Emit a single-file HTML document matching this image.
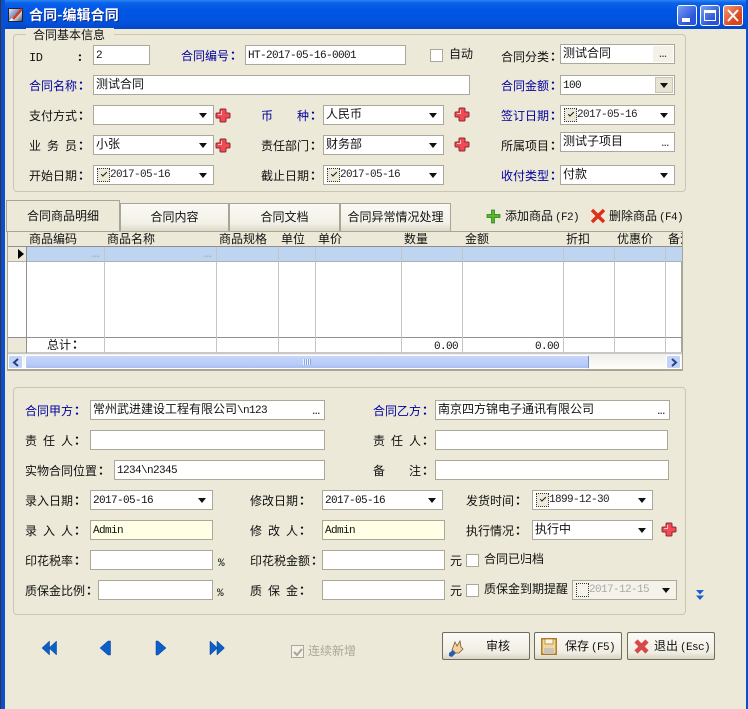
<!DOCTYPE html>
<html><head><meta charset="utf-8"><style>
html,body{margin:0;padding:0}
body{width:748px;height:709px;overflow:hidden;position:relative;background:#ECE9D8;font:12px/14px "WenQuanYi Zen Hei","Noto Sans CJK SC",sans-serif;color:#111}
div,span{position:absolute;box-sizing:border-box;white-space:nowrap}
i{font:bold 12px/14px "Noto Sans CJK JP",sans-serif;margin-left:-2px}
.m{position:static;font:11px/14px "Liberation Mono",monospace;letter-spacing:-.6px}
.b{color:#0000a0}
.i{border:1px solid #aca899;background:#fff;height:20px;padding:1px 0 0 2px;line-height:14px}
.i .m{line-height:15px}
.y{background:#ffffe6}
.a{width:0;height:0;border:4px solid transparent;border-top:5px solid #111;border-bottom:0;top:7px;right:6px}
.e{right:1px;top:1px;bottom:1px;width:20px;color:#444;font:bold 9px/17px "Liberation Sans",sans-serif;text-align:center;background:#f4f2e8}
.k{left:3px;top:2px;width:13px;height:14px;border:1px dotted #333;background:#ece9d8}
.k.x:after{content:"";position:absolute;left:3px;top:3px;width:5px;height:2px;border-left:1.5px solid #111;border-bottom:1.5px solid #111;transform:rotate(-45deg)}
.d{left:16px;top:2px;color:#222}
.c{width:13px;height:13px;border:1px solid #aca899;background:#fff}
.g{position:absolute;border:1px solid #c9c6b5;border-radius:4px}
.v{top:247px;width:1px;height:106px;background:#c4c4c4}
.h{top:232px;height:14px;background:#ece9d8;padding-left:2px;line-height:14px}
.t{background:linear-gradient(#faf9f4,#f3f1e7 70%,#dcd9c8);border:1px solid #a8a594;border-bottom:0;text-align:center;line-height:26px;top:203px;height:28px}
.s{top:632px;height:28px;width:88px;border:1px solid #6f6c5f;border-radius:2px;background:linear-gradient(#fbfaf5,#f0eee3 75%,#d8d4c3);line-height:24px}
svg{position:absolute;overflow:visible}
</style></head><body>
<svg width="0" height="0" style="left:0;top:0"><defs>
<g id="plus"><path d="M5 1h4a1 1 0 0 1 1 1v3h3a1 1 0 0 1 1 1v3a1 1 0 0 1-1 1h-3v3a1 1 0 0 1-1 1H5a1 1 0 0 1-1-1v-3H1a1 1 0 0 1-1-1V6a1 1 0 0 1 1-1h3V2a1 1 0 0 1 1-1z" fill="#ef4a55" stroke="#8c2a30" stroke-width="1"/><path d="M5.500 3v3.500H2" stroke="#ffc0c0" fill="none"/></g>
</defs></svg>

<!-- window frame -->
<div style="left:0;top:0;width:748px;height:29px;background:linear-gradient(#2c86f2 0,#0a62ea 3px,#0056e4 10px,#0053de 22px,#0548c8 28px)"></div>
<div style="left:0;top:0;width:5px;height:709px;background:#0b4ed0"></div>
<div style="left:0;top:0;width:1px;height:709px;background:#334"></div>
<div style="left:746px;top:0;width:2px;height:709px;background:#0b4ed0"></div>
<div style="left:8px;top:8px;width:15px;height:14px;background:linear-gradient(135deg,#e8e8f0,#7a8fc0 45%,#fff 50%,#555);border:1px solid #223"></div>
<svg style="left:12px;top:7px" width="12" height="14"><path d="M1 12L10 2" stroke="#c83c28" stroke-width="2.500"/></svg>
<div style="left:29px;top:8px;color:#fff;font-weight:bold;font-size:14px;text-shadow:1px 1px 0 #0a2a90;letter-spacing:.1px">合同-编辑合同</div>
<div style="left:677px;top:5px;width:20px;height:21px;border:1px solid #fff;border-radius:3px;background:linear-gradient(135deg,#7b9ff0,#2a55d8 70%)"><div style="left:4px;bottom:3px;width:8px;height:4px;background:#fff"></div></div>
<div style="left:700px;top:5px;width:20px;height:21px;border:1px solid #fff;border-radius:3px;background:linear-gradient(135deg,#7b9ff0,#2a55d8 70%)"><div style="left:3px;top:4px;width:12px;height:11px;border:1px solid #fff;border-top:3px solid #fff"></div></div>
<div style="left:723px;top:5px;width:20px;height:21px;border:1px solid #fff;border-radius:3px;background:linear-gradient(135deg,#ef9a7a,#d8451f 70%)"><svg style="left:3px;top:3px" width="12" height="13"><path d="M1 1L11 12M11 1L1 12" stroke="#fff" stroke-width="2"/></svg></div>

<!-- group 1 -->
<div class="g" style="left:13px;top:34px;width:673px;height:158px"></div>
<div style="left:26px;top:28px;width:88px;height:14px;background:#ECE9D8;padding-left:7px">合同基本信息</div>

<div style="left:29px;top:50px"><span class="m" style="letter-spacing:-.4px;font-size:12px">ID</span></div><div style="left:80px;top:50px"><i>:</i></div>
<div class="i" style="left:93px;top:45px;width:57px"><span class="m">2</span></div>
<div class="b" style="left:181px;top:49px">合同编号<i>：</i></div>
<div class="i" style="left:245px;top:45px;width:161px"><span class="m">HT-2017-05-16-0001</span></div>
<div class="c" style="left:430px;top:49px"></div><div style="left:449px;top:47px">自动</div>
<div style="left:501px;top:50px">合同分类<i>：</i></div>
<div class="i" style="left:560px;top:44px;width:115px">测试合同<div class="e">...</div></div>

<div class="b" style="left:29px;top:79px">合同名称<i>：</i></div>
<div class="i" style="left:93px;top:75px;width:377px">测试合同</div>
<div class="b" style="left:501px;top:79px">合同金额<i>：</i></div>
<div class="i" style="left:560px;top:75px;width:115px"><span class="m">100</span><div style="right:1px;top:1px;width:18px;height:16px;background:#e6e3d3;border:1px solid #c9c6b5"><div class="a" style="top:5px;right:4px"></div></div></div>

<div style="left:29px;top:109px">支付方式<i>：</i></div>
<div class="i" style="left:93px;top:105px;width:121px"><div class="a"></div></div>
<svg style="left:216px;top:108px" width="15" height="15"><use href="#plus"/></svg>
<div class="b" style="left:261px;top:109px">币<span class="b" style="left:36px;top:0">种<i>：</i></span></div>
<div class="i" style="left:323px;top:105px;width:121px">人民币<div class="a"></div></div>
<svg style="left:455px;top:107px" width="15" height="15"><use href="#plus"/></svg>
<div class="b" style="left:501px;top:109px">签订日期<i>：</i></div>
<div class="i" style="left:560px;top:105px;width:115px"><div class="k x"></div><div class="d m" style="position:absolute">2017-05-16</div><div class="a"></div></div>

<div style="left:29px;top:139px">业</div><div style="left:47px;top:139px">务</div><div style="left:65px;top:139px">员<i>：</i></div>
<div class="i" style="left:93px;top:135px;width:121px">小张<div class="a"></div></div>
<svg style="left:216px;top:138px" width="15" height="15"><use href="#plus"/></svg>
<div style="left:261px;top:139px">责任部门<i>：</i></div>
<div class="i" style="left:323px;top:135px;width:121px">财务部<div class="a"></div></div>
<svg style="left:455px;top:137px" width="15" height="15"><use href="#plus"/></svg>
<div style="left:501px;top:139px">所属项目<i>：</i></div>
<div class="i" style="left:560px;top:132px;width:115px">测试子项目<div style="right:5px;top:4px;font:bold 9px/12px 'Liberation Sans',sans-serif;color:#444">...</div></div>

<div style="left:29px;top:169px">开始日期<i>：</i></div>
<div class="i" style="left:93px;top:165px;width:121px"><div class="k x"></div><div class="d m" style="position:absolute">2017-05-16</div><div class="a"></div></div>
<div style="left:261px;top:169px">截止日期<i>：</i></div>
<div class="i" style="left:323px;top:165px;width:121px"><div class="k x"></div><div class="d m" style="position:absolute">2017-05-16</div><div class="a"></div></div>
<div class="b" style="left:501px;top:169px">收付类型<i>：</i></div>
<div class="i" style="left:560px;top:165px;width:115px">付款<div class="a"></div></div>

<!-- tabs -->
<div class="t" style="left:120px;width:109px;">合同内容</div>
<div class="t" style="left:229px;width:111px;">合同文档</div>
<div class="t" style="left:340px;width:111px;">合同异常情况处理</div>
<div style="left:6px;top:200px;width:114px;height:32px;background:#ECE9D8;border:1px solid #a8a594;border-bottom:0;text-align:center;line-height:29px">合同商品明细</div>
<svg style="left:486px;top:209px" width="15" height="15"><path d="M5.500 1h3v4.500H14v3H8.500V14h-3V8.500H1v-3h4.500z" fill="#56b82a" stroke="#2c7a18" stroke-width=".7"/></svg>
<div style="left:505px;top:209px">添加商品<span class="m" style="margin-left:2px">(F2)</span></div>
<svg style="left:591px;top:209px" width="14" height="14"><path d="M1 1L13 13M13 1L1 13" stroke="#dd3018" stroke-width="3.400"/></svg>
<div style="left:609px;top:209px">删除商品<span class="m" style="margin-left:2px">(F4)</span></div>

<!-- grid -->
<div style="left:7px;top:231px;width:676px;height:140px;background:#fff;border:1px solid #a8a594;border-right:2px solid #a8a594;border-bottom:2px solid #a8a594;overflow:hidden"></div>
<div style="left:8px;top:232px;width:674px;height:14px;background:#ECE9D8"></div>
<div class="h" style="left:27px;">商品编码</div>
<div class="h" style="left:105px;">商品名称</div>
<div class="h" style="left:217px;">商品规格</div>
<div class="h" style="left:279px;">单位</div>
<div class="h" style="left:316px;">单价</div>
<div class="h" style="left:402px;">数量</div>
<div class="h" style="left:463px;">金额</div>
<div class="h" style="left:564px;">折扣</div>
<div class="h" style="left:615px;">优惠价</div>
<div class="h" style="left:666px;width:16px;overflow:hidden">备注</div>
<div style="left:8px;top:246px;width:674px;height:1px;background:#8f8f8f"></div>
<div style="left:26px;top:247px;width:656px;height:15px;background:#bdd5f0"></div>
<div style="left:8px;top:247px;width:18px;height:15px;background:#ECE9D8"></div>
<div style="left:18px;top:249px;width:0;height:0;border:5px solid transparent;border-left:6px solid #000;border-right:0"></div>
<div style="left:8px;top:261px;width:674px;height:1px;background:#b0b0b0"></div>
<div style="left:8px;top:337px;width:674px;height:1px;background:#8f8f8f"></div>
<div style="left:8px;top:338px;width:18px;height:15px;background:#ECE9D8"></div>
<div style="left:8px;top:352px;width:674px;height:2px;background:#c8c8c8"></div>
<div class="v" style="left:26px;background:#909090"></div>
<div class="v" style="left:104px"></div>
<div class="v" style="left:216px"></div>
<div class="v" style="left:278px"></div>
<div class="v" style="left:315px"></div>
<div class="v" style="left:401px"></div>
<div class="v" style="left:462px"></div>
<div class="v" style="left:563px"></div>
<div class="v" style="left:614px"></div>
<div class="v" style="left:665px"></div>
<div style="left:92px;top:250px;color:#aaa;font:bold 9px/9px 'Liberation Sans',sans-serif">...</div>
<div style="left:204px;top:250px;color:#aaa;font:bold 9px/9px 'Liberation Sans',sans-serif">...</div>
<div style="left:47px;top:338px">总计<i>：</i></div>
<div style="left:434px;top:338px"><span class="m">0.00</span></div>
<div style="left:535px;top:338px"><span class="m">0.00</span></div>
<!-- scrollbar -->
<div style="left:8px;top:354px;width:674px;height:15px;background:linear-gradient(#f0efe8,#fdfdfa)"></div>
<div style="left:8px;top:355px;width:15px;height:14px;border-radius:2px;background:#c2d3fa;border:1px solid #fff"><svg style="left:3px;top:2px" width="8" height="9"><path d="M6 1L2 4.500 6 8" stroke="#2a3f80" stroke-width="2" fill="none"/></svg></div>
<div style="left:25px;top:355px;width:564px;height:14px;border-radius:2px;background:linear-gradient(#c6d6fb,#b8cbf8 70%,#a9bff3);border:1px solid #fff;border-right:1px solid #7a90c8"></div>
<div style="left:303px;top:359px;width:8px;height:6px;background:repeating-linear-gradient(90deg,#eef3ff 0 1px,#8ca5e0 1px 2px)"></div>
<div style="left:666px;top:355px;width:15px;height:14px;border-radius:2px;background:#c2d3fa;border:1px solid #fff"><svg style="left:3px;top:2px" width="8" height="9"><path d="M2 1L6 4.500 2 8" stroke="#2a3f80" stroke-width="2" fill="none"/></svg></div>

<!-- group 2 -->
<div class="g" style="left:13px;top:387px;width:673px;height:228px"></div>

<div class="b" style="left:25px;top:404px">合同甲方<i>：</i></div>
<div class="i" style="left:90px;top:400px;width:235px">常州武进建设工程有限公司<span class="m">\n123</span><div style="right:4px;top:4px;font:bold 9px/12px 'Liberation Sans',sans-serif;color:#333">...</div></div>
<div class="b" style="left:373px;top:404px">合同乙方<i>：</i></div>
<div class="i" style="left:435px;top:400px;width:235px">南京四方锦电子通讯有限公司<div style="right:4px;top:4px;font:bold 9px/12px 'Liberation Sans',sans-serif;color:#333">...</div></div>

<div style="left:25px;top:434px">责</div><div style="left:43px;top:434px">任</div><div style="left:61px;top:434px">人<i>：</i></div>
<div class="i" style="left:90px;top:430px;width:235px"></div>
<div style="left:373px;top:434px">责</div><div style="left:391px;top:434px">任</div><div style="left:409px;top:434px">人<i>：</i></div>
<div class="i" style="left:435px;top:430px;width:233px"></div>

<div style="left:25px;top:464px">实物合同位置<i>：</i></div>
<div class="i" style="left:114px;top:460px;width:211px"><span class="m">1234\n2345</span></div>
<div style="left:373px;top:464px">备</div><div style="left:409px;top:464px">注<i>：</i></div>
<div class="i" style="left:435px;top:460px;width:234px"></div>

<div style="left:25px;top:494px">录入日期<i>：</i></div>
<div class="i" style="left:90px;top:490px;width:123px"><span class="m">2017-05-16</span><div class="a"></div></div>
<div style="left:250px;top:494px">修改日期<i>：</i></div>
<div class="i" style="left:322px;top:490px;width:121px"><span class="m">2017-05-16</span><div class="a"></div></div>
<div style="left:466px;top:494px">发货时间<i>：</i></div>
<div class="i" style="left:532px;top:490px;width:121px"><div class="k x"></div><div class="d m" style="position:absolute">1899-12-30</div><div class="a"></div></div>

<div style="left:25px;top:524px">录</div><div style="left:43px;top:524px">入</div><div style="left:61px;top:524px">人<i>：</i></div>
<div class="i y" style="left:90px;top:520px;width:123px"><span class="m">Admin</span></div>
<div style="left:250px;top:524px">修</div><div style="left:268px;top:524px">改</div><div style="left:286px;top:524px">人<i>：</i></div>
<div class="i y" style="left:322px;top:520px;width:123px"><span class="m">Admin</span></div>
<div style="left:466px;top:524px">执行情况<i>：</i></div>
<div class="i" style="left:532px;top:520px;width:121px">执行中<div class="a"></div></div>
<svg style="left:662px;top:522px" width="15" height="15"><use href="#plus"/></svg>

<div style="left:25px;top:554px">印花税率<i>：</i></div>
<div class="i" style="left:90px;top:550px;width:123px"></div>
<div style="left:218px;top:555px"><span class="m">%</span></div>
<div style="left:250px;top:554px">印花税金额<i>：</i></div>
<div class="i" style="left:322px;top:550px;width:123px"></div>
<div style="left:450px;top:554px">元</div>
<div class="c" style="left:466px;top:554px"></div>
<div style="left:484px;top:552px">合同已归档</div>

<div style="left:25px;top:584px">质保金比例<i>：</i></div>
<div class="i" style="left:98px;top:580px;width:115px"></div>
<div style="left:217px;top:585px"><span class="m">%</span></div>
<div style="left:250px;top:584px">质</div><div style="left:268px;top:584px">保</div><div style="left:286px;top:584px">金<i>：</i></div>
<div class="i" style="left:322px;top:580px;width:123px"></div>
<div style="left:450px;top:584px">元</div>
<div class="c" style="left:466px;top:584px"></div>
<div style="left:484px;top:582px">质保金到期提醒</div>
<div class="i" style="left:572px;top:580px;width:105px;background:#f4f2e9"><div class="k" style="background:#f4f2e9"></div><div class="d m" style="position:absolute;color:#aaa">2017-12-15</div><div class="a"></div></div>
<svg style="left:696px;top:590px" width="9" height="12"><path d="M0 0h8L4 4.500zM0 5.500h8L4 10z" fill="#1c5fd0"/></svg>

<!-- nav -->
<svg style="left:42px;top:641px" width="15" height="15"><path d="M7.500 0v14L0 7zM14.500 0v14L7 7z" fill="#0a5fc8" stroke="#0a3f90" stroke-width=".5"/></svg>
<svg style="left:100px;top:641px" width="11" height="15"><path d="M8 0L0 7l8 7h2.500V0z" fill="#0a5fc8" stroke="#0a3f90" stroke-width=".5"/></svg>
<svg style="left:156px;top:641px" width="11" height="15"><path d="M2 0l8 7-8 7H0V0z" fill="#0a5fc8" stroke="#0a3f90" stroke-width=".5"/></svg>
<svg style="left:210px;top:641px" width="15" height="15"><path d="M0 0v14l7.500-7zM7 0v14l7.500-7z" fill="#0a5fc8" stroke="#0a3f90" stroke-width=".5"/></svg>
<div style="left:291px;top:645px;width:13px;height:13px;border:1px solid #aca899;background:#f4f2e8"><svg style="left:1px;top:2px" width="10" height="8"><path d="M1 4l3 3 5-6" stroke="#a8a594" stroke-width="2" fill="none"/></svg></div>
<div style="left:308px;top:644px;color:#aca899">连续新增</div>

<!-- buttons -->
<div class="s" style="left:442px"><span style="left:43px;top:1px">审核</span>
<svg style="left:5px;top:5px" width="16" height="20"><path d="M4 12L7 4l2 4 3-5 1 6 2 2-4 4H7z" fill="#f3d2a0" stroke="#7a5a30" stroke-width=".8"/><path d="M1 15l4-3 3 3-4 4-3-1z" fill="#2a5fa8"/></svg></div>
<div class="s" style="left:534px"><span style="left:30px;top:1px">保存<span class="m" style="margin-left:2px">(F5)</span></span>
<svg style="left:6px;top:5px" width="16" height="17"><path d="M.8.800h14.400v15.400H.8z" fill="#f0d9a0" stroke="#b07a20" stroke-width="1.500"/><path d="M4 1h8v5H4z" fill="#f8f4e6" stroke="#b07a20" stroke-width=".7"/><path d="M3 10h10v6H3z" fill="#c8c4b8"/></svg></div>
<div class="s" style="left:627px"><span style="left:26px;top:1px">退出<span class="m" style="margin-left:2px">(Esc)</span></span>
<svg style="left:6px;top:6px" width="15" height="15"><path d="M2 2l11 11M13 2L2 13" stroke="#d84848" stroke-width="4.500"/></svg></div>
</body></html>
